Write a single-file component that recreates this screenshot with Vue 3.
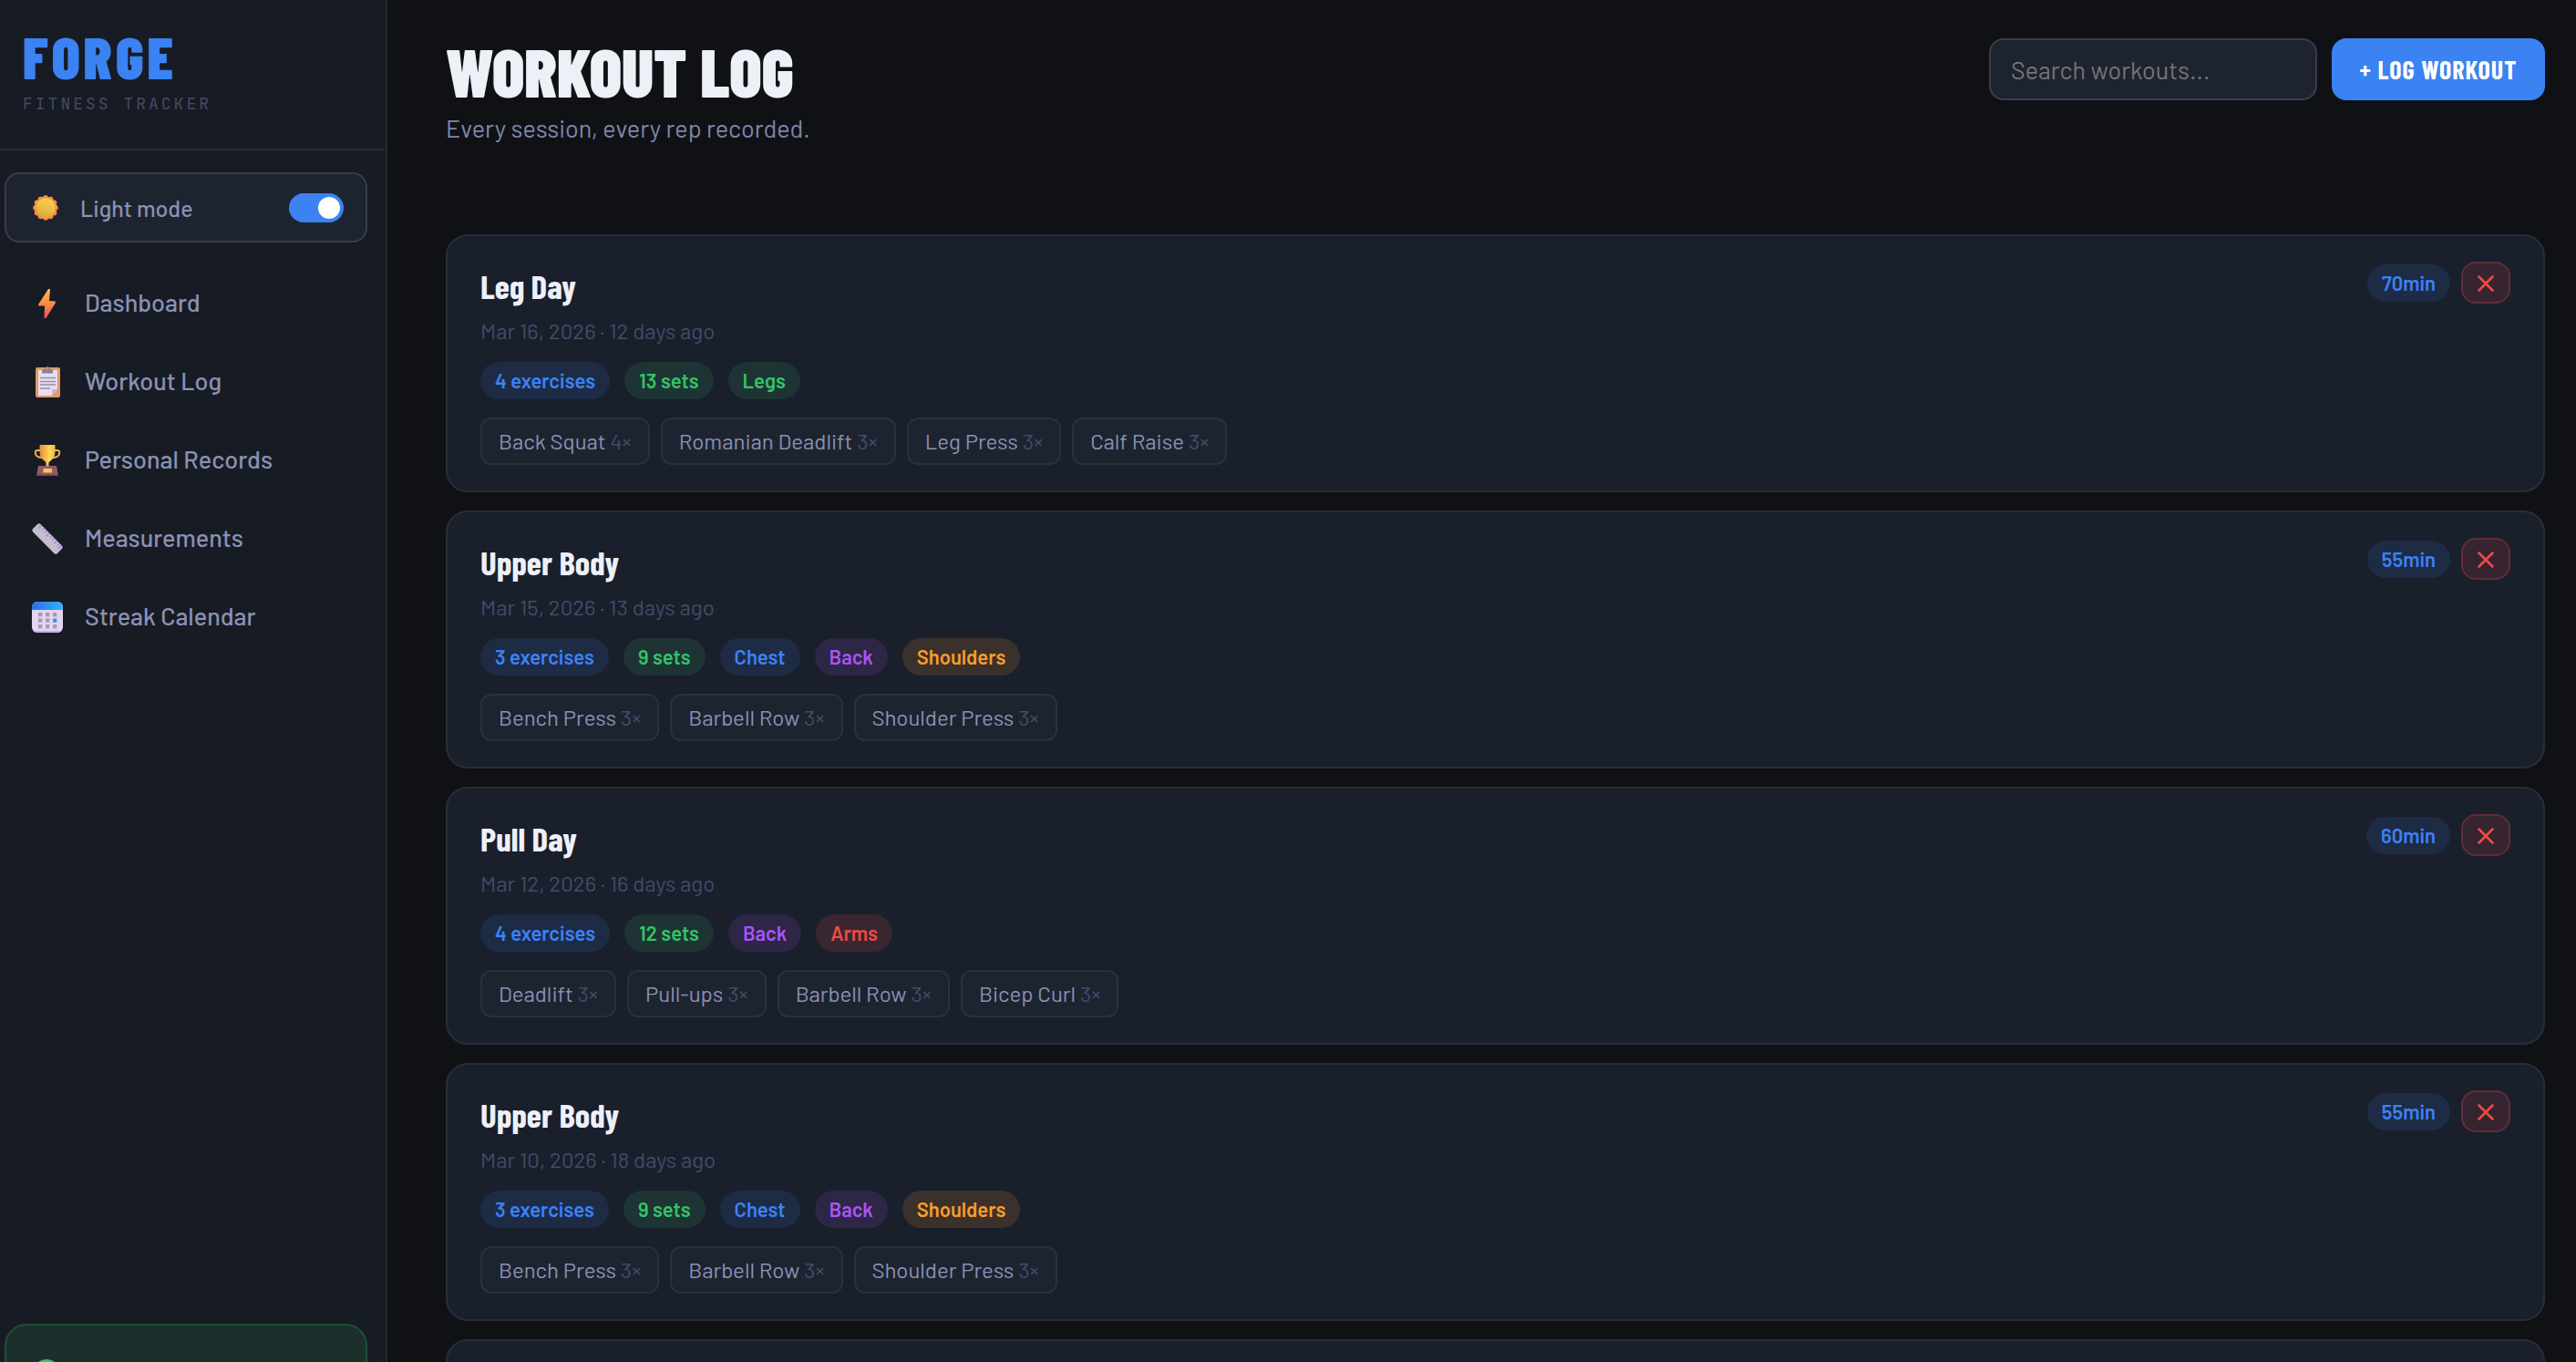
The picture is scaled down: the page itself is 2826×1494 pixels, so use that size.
<template>
  <div class="app">
    <aside class="sidebar">
      <div class="brand">
        <div class="brand-name">FORGE</div>
        <div class="brand-sub">FITNESS TRACKER</div>
      </div>

      <label class="theme-toggle" for="theme">
        <svg class="sun" viewBox="0 0 28 28" aria-hidden="true">
          <defs>
            <linearGradient id="sunRays" x1="0" y1="0" x2="0" y2="1">
              <stop offset="0" stop-color="#ff9f3a" />
              <stop offset="1" stop-color="#f0803c" />
            </linearGradient>
            <linearGradient id="sunCore" x1="0.7" y1="0" x2="0.3" y2="1">
              <stop offset="0" stop-color="#ffd34e" />
              <stop offset="1" stop-color="#d9a741" />
            </linearGradient>
          </defs>
          <g fill="url(#sunRays)">
            <circle cx="14" cy="14" r="12" />
            <circle v-for="ray in rays" :key="ray.id" :cx="ray.x" :cy="ray.y" r="3" />
          </g>
          <circle cx="14" cy="14" r="10.6" fill="url(#sunCore)" />
        </svg>
        <span class="theme-label">Light mode</span>
        <input id="theme" v-model="themeOn" class="switch" type="checkbox" role="switch" />
      </label>

      <nav class="nav">
        <a class="nav-item" href="#dashboard">
          <svg class="nav-icon" viewBox="0 0 36 36" aria-hidden="true">
            <defs>
              <linearGradient id="bolt" x1="0" y1="0" x2="0" y2="1">
                <stop offset="0" stop-color="#ffc04d" />
                <stop offset="0.5" stop-color="#fb8b45" />
                <stop offset="1" stop-color="#ee4f58" />
              </linearGradient>
            </defs>
            <path d="M19 2 L21 2 L20 15 L26.500 15.500 L27 17 L16.500 34 L14.500 34 L15 20.500 L8.500 20.500 L8 19 Z" fill="url(#bolt)" />
          </svg>
          Dashboard
        </a>
        <a class="nav-item" href="#workouts">
          <svg class="nav-icon" viewBox="0 0 36 36" aria-hidden="true">
            <rect x="5" y="2" width="27" height="33" rx="2" fill="#e09a63" />
            <path d="M8 5h21v21l-6 7H8z" fill="#e7def0" />
            <path d="M29 26v0l-6 7v-6q0-1 1-1z" fill="#c3b9d3" />
            <path d="M12 8.500V6q0-2 3-2l1-2q2-2 4 0l1 2q3 0 3 2v2.500z" fill="#8b8294" />
            <circle cx="18" cy="3.500" r="1" fill="#e09a63" />
            <path d="M10 13.500h17M10 17.500h17M10 21h17M10 25h11" stroke="#988ea6" stroke-width="1.300" />
          </svg>
          Workout Log
        </a>
        <a class="nav-item" href="#records">
          <svg class="nav-icon" viewBox="0 0 36 36" aria-hidden="true">
            <defs>
              <linearGradient id="cup" x1="0" y1="0" x2="1" y2="0">
                <stop offset="0" stop-color="#e98a3c" />
                <stop offset="0.65" stop-color="#fdd95a" />
                <stop offset="1" stop-color="#f5b54a" />
              </linearGradient>
            </defs>
            <path d="M10 7H7q-3 0-2 4t8 4M26 7h3q3 0 2 4t-8 4" fill="none" stroke="#f5b04a" stroke-width="2" />
            <path d="M9.500 1h17v7q0 7-4 9.500t-3 6l3 1.500h-9l3-1.500q1-3.500-3-6T9.500 8z" fill="url(#cup)" />
            <path d="M8 24h20l2 11H6z" fill="#965a63" />
            <path d="M6 33.500h24v1.500H6z" fill="#7b3f63" />
            <rect x="13.500" y="27" width="9.500" height="4.500" rx="0.500" fill="#fbc35a" />
          </svg>
          Personal Records
        </a>
        <a class="nav-item" href="#measurements">
          <svg class="nav-icon" viewBox="0 0 36 36" aria-hidden="true">
            <g transform="rotate(45 18 18)">
              <rect x="-1" y="12" width="38" height="12" rx="2.500" fill="#c2bfcb" />
              <path d="M3 12v5M7 12v3M11 12v3M15 12v5M19 12v3M23 12v3M27 12v5M31 12v3M34 12v5" stroke="#a27ae0" stroke-width="1.300" />
            </g>
          </svg>
          Measurements
        </a>
        <a class="nav-item" href="#streak">
          <svg class="nav-icon" viewBox="0 0 36 36" aria-hidden="true">
            <defs>
              <linearGradient id="calTop" x1="0" y1="0" x2="1" y2="0">
                <stop offset="0" stop-color="#2f6ce8" />
                <stop offset="1" stop-color="#33b1ff" />
              </linearGradient>
            </defs>
            <rect x="1" y="1" width="34" height="34" rx="6" fill="#e3d5ef" />
            <path d="M1 10V7q0-6 6-6h22q6 0 6 6v3z" fill="url(#calTop)" />
            <path d="M3 33q2 2 4 2h22q2 0 4-2z" fill="#cfa9e8" />
            <g fill="#a79bb4">
              <rect x="8" y="13" width="4.300" height="4.300" />
              <rect x="16" y="13" width="4.300" height="4.300" />
              <rect x="24" y="13" width="4.300" height="4.300" />
              <rect x="8" y="19.500" width="4.300" height="4.300" />
              <rect x="16" y="19.500" width="4.300" height="4.300" />
              <rect x="24" y="19.500" width="4.300" height="4.300" fill="#3897f0" />
              <rect x="8" y="26" width="4.300" height="4.300" />
              <rect x="16" y="26" width="4.300" height="4.300" />
              <rect x="24" y="26" width="4.300" height="4.300" />
            </g>
          </svg>
          Streak Calendar
        </a>
      </nav>

      <div class="status">
        <span class="status-dot"></span>
      </div>
    </aside>

    <main class="main">
      <header class="page-header">
        <div>
          <h1>WORKOUT LOG</h1>
          <p class="subtitle">Every session, every rep recorded.</p>
        </div>
        <div class="actions">
          <input v-model="search" class="search" type="text" placeholder="Search workouts..." aria-label="Search workouts" />
          <button class="log-button" type="button">+ LOG WORKOUT</button>
        </div>
      </header>

      <section class="workouts">
        <article v-for="workout in filteredWorkouts" :key="workout.id" class="card">
          <div class="card-info">
            <h2>{{ workout.name }}</h2>
            <p class="date">{{ workout.date }} · {{ workout.ago }} days ago</p>
            <div class="tags">
              <span class="tag blue">{{ workout.exercises.length }} exercises</span>
              <span class="tag green">{{ totalSets(workout) }} sets</span>
              <span v-for="muscle in workout.muscles" :key="muscle" class="tag" :class="muscleColors[muscle]">{{ muscle }}</span>
            </div>
            <div class="exercises">
              <span v-for="ex in workout.exercises" :key="ex.name" class="exercise">
                {{ ex.name }} <span class="sets">{{ ex.sets }}×</span>
              </span>
            </div>
          </div>
          <div class="card-side">
            <span class="tag blue">{{ workout.minutes }}min</span>
            <button class="delete" type="button" aria-label="Delete workout" @click="removeWorkout(workout.id)">
              <svg viewBox="0 0 20 20" aria-hidden="true">
                <path d="M2.500 3.500 L17.500 18.500 M17.500 3.500 L2.500 18.500" />
              </svg>
            </button>
          </div>
        </article>
        <div class="card card-pending"></div>
      </section>
    </main>
  </div>
</template>

<script setup>
import { computed, ref } from 'vue'

const search = ref('')
const themeOn = ref(true)

const muscleColors = {
  Legs: 'green',
  Chest: 'blue',
  Back: 'purple',
  Shoulders: 'orange',
  Arms: 'red'
}

const upperBody = [
  { name: 'Bench Press', sets: 3 },
  { name: 'Barbell Row', sets: 3 },
  { name: 'Shoulder Press', sets: 3 }
]

const legDay = [
  { name: 'Back Squat', sets: 4 },
  { name: 'Romanian Deadlift', sets: 3 },
  { name: 'Leg Press', sets: 3 },
  { name: 'Calf Raise', sets: 3 }
]

const pullDay = [
  { name: 'Deadlift', sets: 3 },
  { name: 'Pull-ups', sets: 3 },
  { name: 'Barbell Row', sets: 3 },
  { name: 'Bicep Curl', sets: 3 }
]

const workouts = ref([
  { id: 1, name: 'Leg Day', date: 'Mar 16, 2026', ago: 12, minutes: 70, muscles: ['Legs'], exercises: legDay },
  { id: 2, name: 'Upper Body', date: 'Mar 15, 2026', ago: 13, minutes: 55, muscles: ['Chest', 'Back', 'Shoulders'], exercises: upperBody },
  { id: 3, name: 'Pull Day', date: 'Mar 12, 2026', ago: 16, minutes: 60, muscles: ['Back', 'Arms'], exercises: pullDay },
  { id: 4, name: 'Upper Body', date: 'Mar 10, 2026', ago: 18, minutes: 55, muscles: ['Chest', 'Back', 'Shoulders'], exercises: upperBody }
])

const filteredWorkouts = computed(() =>
  workouts.value.filter(w => w.name.toLowerCase().includes(search.value.toLowerCase()))
)

const totalSets = workout => workout.exercises.reduce((sum, ex) => sum + ex.sets, 0)

const removeWorkout = id => {
  workouts.value = workouts.value.filter(w => w.id !== id)
}

// bumps around the edge of the sun
const rays = Array.from({ length: 12 }, (_, i) => ({
  id: i,
  x: 14 + 10.8 * Math.cos((i * Math.PI) / 6),
  y: 14 + 10.8 * Math.sin((i * Math.PI) / 6)
}))
</script>

<style>
body {
  margin: 0;
  background: #101115;
}
</style>

<style scoped>
.app {
  --heading: 'Barlow Condensed', Roboto, sans-serif;
  display: flex;
  height: 100vh;
  overflow: hidden;
  background: #101115;
  color: #eef0f8;
  font-family: Barlow, Roboto, sans-serif;
  font-size: 24px;
}

.app * {
  box-sizing: border-box;
}

h1,
h2,
p {
  margin: 0;
}

.sidebar {
  display: flex;
  flex-direction: column;
  flex: 0 0 425px;
  background: #171b23;
  border-right: 2px solid #252831;
}

.brand {
  height: 165px;
  padding: 29px 25px 0;
  border-bottom: 2px solid #252a34;
}

.brand-name {
  font-family: var(--heading);
  font-size: 64px;
  font-weight: 900;
  line-height: 66px;
  letter-spacing: 4px;
  color: #3b82f2;
}

.brand-sub {
  font-family: 'JetBrains Mono', 'Liberation Mono', monospace;
  font-size: 18px;
  letter-spacing: 3px;
  line-height: 38px;
  color: #454a68;
}

.theme-toggle {
  display: flex;
  align-items: center;
  height: 77px;
  margin: 24px 20px 0 5px;
  padding: 0 24px 0 29px;
  background: #1e2330;
  border: 2px solid #3a3d4a;
  border-radius: 16px;
  cursor: pointer;
}

.sun {
  width: 28px;
  height: 28px;
  margin-right: 24px;
}

.theme-label {
  flex: 1;
  font-size: 25px;
  font-weight: 500;
  color: #8a91b4;
}

.switch {
  appearance: none;
  width: 60px;
  height: 32px;
  margin: 0;
  padding: 4px;
  background: #3b82f2;
  border-radius: 16px;
  cursor: pointer;
}

.switch::before {
  content: '';
  display: block;
  width: 24px;
  height: 24px;
  border-radius: 50%;
  background: #fff;
}

.switch:checked::before {
  margin-left: 28px;
}

.nav {
  display: flex;
  flex-direction: column;
  flex: 1;
  gap: 6px;
  padding: 25px 20px 0 5px;
}

.nav-item {
  display: flex;
  align-items: center;
  gap: 23px;
  height: 80px;
  padding: 0 29px;
  font-size: 27px;
  font-weight: 500;
  color: #8a91b4;
  text-decoration: none;
}

.nav-icon {
  width: 36px;
  height: 36px;
  margin-top: 4px;
}

/* runs past the bottom edge of the window */
.status {
  flex: 0 0 122px;
  margin: 0 20px -80px 5px;
  padding: 37px 29px;
  background: #1c2f2c;
  border: 2px solid #1f4f38;
  border-radius: 24px;
}

.status-dot {
  display: block;
  width: 30px;
  height: 30px;
  border-radius: 50%;
  background: #2fc665;
}

.main {
  flex: 1;
  min-width: 0;
  padding: 42px 34px 0 64px;
}

.page-header {
  display: flex;
  justify-content: space-between;
  align-items: flex-start;
  height: 215px;
}

h1 {
  font-family: var(--heading);
  font-size: 73px;
  font-weight: 900;
  line-height: 72px;
}

.subtitle {
  font-size: 27px;
  line-height: 52px;
  color: #7f87ab;
}

.actions {
  display: flex;
  gap: 16px;
}

.search {
  width: 360px;
  height: 68px;
  padding: 0 22px;
  font-family: inherit;
  font-size: 27px;
  color: #eef0f8;
  background: #1e2330;
  border: 2px solid #3a3d4c;
  border-radius: 16px;
  outline: none;
}

.search::placeholder {
  color: #757575;
}

.log-button {
  width: 234px;
  height: 68px;
  padding: 0;
  font-family: var(--heading);
  font-size: 28px;
  font-weight: 700;
  letter-spacing: 1px;
  color: #fff;
  background: #3b82f2;
  border: none;
  border-radius: 16px;
  cursor: pointer;
}

.workouts {
  display: flex;
  flex-direction: column;
  gap: 20px;
}

.card {
  display: flex;
  justify-content: space-between;
  align-items: flex-start;
  padding: 28px 36px;
  background: #1a1f2c;
  border: 2px solid #282d39;
  border-radius: 24px;
}

.card-pending {
  height: 283px;
}

h2 {
  font-family: var(--heading);
  font-size: 37px;
  font-weight: 700;
  line-height: 53px;
}

.date {
  margin-bottom: 11px;
  line-height: 46px;
  color: #454a68;
}

.tags {
  display: flex;
  gap: 16px;
  margin-bottom: 20px;
}

.tag {
  padding: 0 16px;
  font-size: 22px;
  font-weight: 600;
  line-height: 41px;
  border-radius: 21px;
}

.blue {
  color: #3b82f6;
  background: #1e2b45;
}

.green {
  color: #33c467;
  background: #1e3334;
}

.purple {
  color: #a855f7;
  background: #2d2646;
}

.orange {
  color: #f99d2b;
  background: #3a302c;
}

.red {
  color: #ef4a45;
  background: #3a2630;
}

.exercises {
  display: flex;
  gap: 12px;
}

.exercise {
  padding: 0 18px;
  line-height: 48px;
  color: #8a91b4;
  background: #1e2330;
  border: 2px solid #2c303d;
  border-radius: 12px;
}

.sets {
  color: #454a68;
}

.card-side {
  display: flex;
  align-items: center;
  gap: 12px;
}

.delete {
  display: flex;
  align-items: center;
  justify-content: center;
  width: 54px;
  height: 46px;
  padding: 0;
  background: #362530;
  border: 2px solid #5e2e36;
  border-radius: 16px;
  cursor: pointer;
}

.delete svg {
  width: 20px;
  height: 20px;
  fill: none;
  stroke: #f04c45;
  stroke-width: 2.5;
  stroke-linecap: round;
}
</style>
